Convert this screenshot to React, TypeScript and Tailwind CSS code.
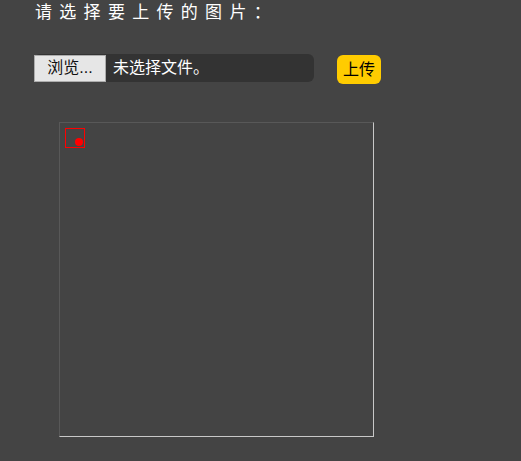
import React from "react";

const App: React.FC = () => {
  return (
    <div
      className="w-[521px] h-[461px] bg-[#444444] text-white overflow-hidden"
      style={{ fontFamily: '"Liberation Sans", "Noto Sans CJK SC", sans-serif' }}
    >
      {/* Title */}
      <div className="pl-[35px] pt-[2px] h-[22px] text-[17px] leading-[22px] tracking-[7.3px] text-white">
        请选择要上传的图片：
      </div>

      {/* File row */}
      <div className="flex items-start pl-[34px] mt-[32px]">
        <div className="flex items-center w-[280px] h-[28px] bg-[#333333] rounded-[6px]">
          <button className="h-[27px] w-[72px] bg-[#e6e6e6] border border-[#adadad] text-[#111] text-[16px] leading-none">
            浏览...
          </button>
          <span className="ml-[7px] text-[16px] text-white">未选择文件。</span>
        </div>
        <button className="ml-[23px] mt-[1px] w-[44px] h-[29px] bg-[#ffcc00] rounded-[6px] text-[16px] !text-black leading-none">
          上传
        </button>
      </div>

      {/* Canvas */}
      <div className="ml-[59px] mt-[38px] w-[315px] h-[315px] border border-t-[#585858] border-l-[#585858] border-r-[#c8c8c8] border-b-[#c8c8c8]">
        <div className="relative ml-[5px] mt-[5px] w-[20px] h-[20px] border border-[#ff0000]">
          <div className="absolute left-[9px] top-[9px] w-[8px] h-[8px] rounded-full bg-[#ff0000]" />
        </div>
      </div>
    </div>
  );
};

export default App;
